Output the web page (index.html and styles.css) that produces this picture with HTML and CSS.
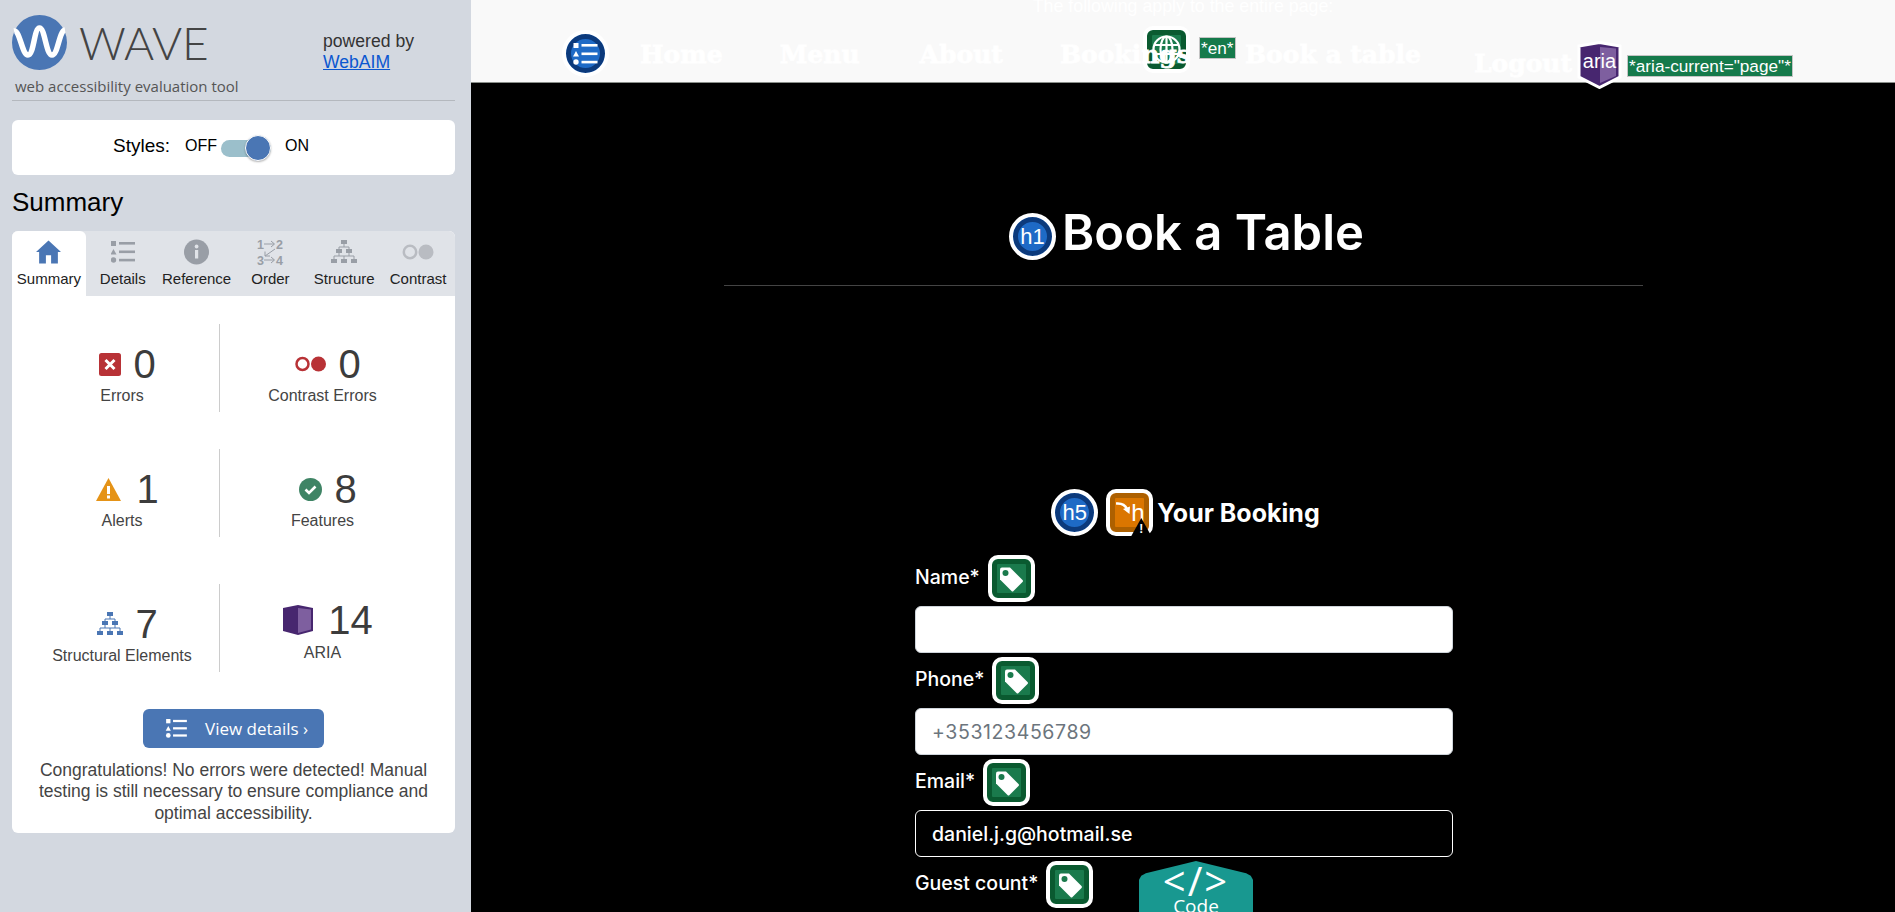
FILE: index.html
```html
<!DOCTYPE html>
<html lang="en">
<head>
    <meta charset="UTF-8">
    <meta name="viewport" content="width=device-width, initial-scale=1.0">
    <title>Book a Table - WAVE</title>
    <link rel="stylesheet" href="styles.css">
</head>
<body>
    <!-- shared icons -->
    <svg class="icon-defs" aria-hidden="true">
        <symbol id="icon-tag" viewBox="0 0 26 26">
            <path d="M2 3.500Q2 1.500 4 1.500H12L24.500 14Q25.500 15 24.500 16L15.500 25Q14.500 26 13.500 25L2 13.500Z" fill="#fff"/>
            <circle cx="7.500" cy="7" r="3" fill="#1a7a4c"/>
        </symbol>
        <symbol id="icon-list" viewBox="0 0 24 22">
            <rect x="0" y="0" width="5" height="5"/>
            <path d="M2.500 8L5.500 13.500H-0.500Z"/>
            <circle cx="2.500" cy="19" r="2.700"/>
            <rect x="8" y="1" width="16" height="2.600"/>
            <rect x="8" y="9.500" width="16" height="2.600"/>
            <rect x="8" y="17.800" width="16" height="2.600"/>
        </symbol>
    </svg>

    <aside class="wave-panel">
        <div class="brand">
            <div class="brand-main">
                <div class="brand-logo">
                    <svg class="logo-mark" viewBox="0 0 55 55">
                        <circle cx="27.500" cy="27.500" r="27.500" fill="#4a76b4"/>
                        <path d="M2 16C8 15 10 40 16 40C22 40 22 13 27.500 13C33 13 34 40 40 40C46 40 47 16 53 15" fill="none" stroke="#fff" stroke-width="5.500"/>
                    </svg>
                    <span class="logo-word">WAVE</span>
                </div>
                <p class="tagline">web accessibility evaluation tool</p>
            </div>
            <p class="powered">powered by<br><a href="#">WebAIM</a></p>
        </div>

        <div class="styles-card">
            <span class="styles-label">Styles:</span>
            <span class="styles-state">OFF</span>
            <span class="toggle"><span class="toggle-knob"></span></span>
            <span class="styles-state">ON</span>
        </div>

        <h2 class="panel-title">Summary</h2>

        <section class="summary-panel">
            <div class="tabs">
                <div class="tab active">
                    <svg class="tab-icon" width="25" height="22" viewBox="0 0 24 22"><path d="M12 0L24 11H21V22H14.500V14H9.500V22H3V11H0Z" fill="#4a76b4"/></svg>
                    <span>Summary</span>
                </div>
                <div class="tab">
                    <svg class="tab-icon grey" width="24" height="22"><use href="#icon-list"/></svg>
                    <span>Details</span>
                </div>
                <div class="tab">
                    <svg class="tab-icon" width="25" height="25" viewBox="0 0 25 25"><circle cx="12.500" cy="12.500" r="12.500" fill="#999ea6"/><rect x="11" y="10.500" width="3.200" height="8.500" fill="#e0e3e8"/><circle cx="12.600" cy="7" r="1.900" fill="#e0e3e8"/></svg>
                    <span>Reference</span>
                </div>
                <div class="tab">
                    <svg class="tab-icon" width="26" height="26" viewBox="0 0 26 26">
                        <text x="0" y="9.500" class="order-num">1</text>
                        <text x="19" y="9.500" class="order-num">2</text>
                        <text x="0" y="25.500" class="order-num">3</text>
                        <text x="19" y="25.500" class="order-num">4</text>
                        <path d="M7 5H17M14 2L17.500 5L14 8M7 21H17M14 18L17.500 21L14 24M18 10L8 17M8 12.500V17H13" fill="none" stroke="#999ea6" stroke-width="1"/>
                    </svg>
                    <span>Order</span>
                </div>
                <div class="tab">
                    <svg class="tab-icon" width="26" height="24" viewBox="0 0 26 24" fill="#999ea6">
                        <rect x="10" y="0" width="6" height="4"/>
                        <rect x="5" y="9" width="6" height="4"/>
                        <rect x="15" y="9" width="6" height="4"/>
                        <rect x="0" y="19" width="6" height="4"/>
                        <rect x="10" y="19" width="6" height="4"/>
                        <rect x="20" y="19" width="6" height="4"/>
                        <path d="M13 4V7M8 9V7H18V9M8 13V16M3 19V16H23V19M13 16V19M18 13V16" fill="none" stroke="#999ea6"/>
                    </svg>
                    <span>Structure</span>
                </div>
                <div class="tab">
                    <svg class="tab-icon" width="32" height="16" viewBox="0 0 32 16"><circle cx="8" cy="8" r="6.200" fill="none" stroke="#b9bcc2" stroke-width="2.500"/><circle cx="24" cy="8" r="7.500" fill="#b9bcc2"/></svg>
                    <span>Contrast</span>
                </div>
            </div>

            <div class="stats">
                <div class="stat">
                    <div class="stat-top">
                        <svg width="22" height="23" viewBox="0 0 22 23"><rect width="22" height="23" rx="2.500" fill="#b83236"/><path d="M6.500 7L15.500 16M15.500 7L6.500 16" stroke="#fff" stroke-width="3"/></svg>
                        <span class="stat-num">0</span>
                    </div>
                    <div class="stat-label">Errors</div>
                </div>
                <div class="stat">
                    <div class="stat-top">
                        <svg width="31" height="16" viewBox="0 0 31 16"><circle cx="7.500" cy="8" r="6" fill="none" stroke="#b83236" stroke-width="2.500"/><circle cx="23.500" cy="8" r="7.500" fill="#b83236"/></svg>
                        <span class="stat-num">0</span>
                    </div>
                    <div class="stat-label">Contrast Errors</div>
                </div>
                <div class="stat">
                    <div class="stat-top">
                        <svg width="25" height="23" viewBox="0 0 25 23"><path d="M12.500 0L25 23H0Z" fill="#e59317"/><rect x="11" y="8" width="3" height="8" fill="#fff"/><rect x="11" y="17.500" width="3" height="3" fill="#fff"/></svg>
                        <span class="stat-num num-gap">1</span>
                    </div>
                    <div class="stat-label">Alerts</div>
                </div>
                <div class="stat">
                    <div class="stat-top">
                        <svg width="23" height="23" viewBox="0 0 23 23"><circle cx="11.500" cy="11.500" r="11.500" fill="#3f8465"/><path d="M6.500 11.500L10 15L16.500 8.500" fill="none" stroke="#fff" stroke-width="2.600"/></svg>
                        <span class="stat-num">8</span>
                    </div>
                    <div class="stat-label">Features</div>
                </div>
                <div class="stat stat-last">
                    <div class="stat-top">
                        <svg width="26" height="24" viewBox="0 0 26 24" fill="#4a76b4">
                            <rect x="10" y="0" width="6" height="4"/>
                            <rect x="5" y="9" width="6" height="4"/>
                            <rect x="15" y="9" width="6" height="4"/>
                            <rect x="0" y="19" width="6" height="4"/>
                            <rect x="10" y="19" width="6" height="4"/>
                            <rect x="20" y="19" width="6" height="4"/>
                            <path d="M13 4V7M8 9V7H18V9M8 13V16M3 19V16H23V19M13 16V19M18 13V16" fill="none" stroke="#4a76b4"/>
                        </svg>
                        <span class="stat-num">7</span>
                    </div>
                    <div class="stat-label">Structural Elements</div>
                </div>
                <div class="stat stat-last stat-aria">
                    <div class="stat-top">
                        <svg width="30" height="30" viewBox="0 0 30 30"><path d="M0 3L15 0L30 3V26L15 30L0 26Z" fill="#47266f"/><path d="M15 3L28 4.500V24.500L15 28Z" fill="#7e5f9f"/></svg>
                        <span class="stat-num num-gap">14</span>
                    </div>
                    <div class="stat-label">ARIA</div>
                </div>
            </div>

            <a class="details-btn" href="#">
                <svg class="details-icon" width="23" height="19"><use href="#icon-list"/></svg>
                View details ›
            </a>
            <p class="congrats">Congratulations! No errors were detected! Manual testing is still necessary to ensure compliance and optimal accessibility.</p>
        </section>
    </aside>

    <main class="page">
        <header class="site-header">
            <p class="page-note">The following apply to the entire page:</p>
            <div class="wave-lang">
                <span class="badge badge-square">
                    <svg width="31" height="31" viewBox="0 0 31 31" fill="none" stroke="#fff" stroke-width="2.200"><circle cx="15.500" cy="15.500" r="13"/><ellipse cx="15.500" cy="15.500" rx="6" ry="13"/><path d="M15.500 2.500V28.500M3 11H28M3 20H28"/></svg>
                </span>
                <span class="attr-tag">*en*</span>
            </div>
            <nav class="site-nav">
                <span class="badge badge-round badge-nav">
                    <svg width="25" height="22"><use href="#icon-list"/></svg>
                </span>
                <a href="#">Home</a>
                <a class="nav-menu" href="#">Menu</a>
                <a href="#">About</a>
                <a class="nav-bookings" href="#">Bookings</a>
                <a href="#">Book a table</a>
                <div class="nav-current">
                    <a href="#">Logout</a>
                    <svg class="aria-badge" width="45" height="48" viewBox="0 0 45 48">
                        <path d="M2 5L22.500 1.500L43 5V36L22.500 46.500L2 36Z" fill="#47266f" stroke="#fff" stroke-width="3"/>
                        <path d="M23 6L39 7.500V35L23 42Z" fill="#7e5f9f"/>
                        <text x="22.500" y="27" class="aria-text">aria</text>
                    </svg>
                    <span class="attr-tag">*aria-current="page"*</span>
                </div>
            </nav>
        </header>

        <div class="title-row">
            <span class="badge badge-round">h1</span>
            <h1>Book a Table</h1>
        </div>

        <form class="booking-form">
            <div class="booking-head">
                <span class="badge badge-round">h5</span>
                <span class="badge badge-square badge-warn">
                    <svg class="warn-arrow" width="15" height="13" viewBox="0 0 15 13"><path d="M0 1.500C5 1 9 2.500 11 7" fill="none" stroke="#fff" stroke-width="2.500"/><path d="M7 7L14 4.500L13.500 12Z" fill="#fff"/></svg>
                    <span class="warn-h">h</span>
                    <span class="warn-flag">!</span>
                </span>
                <h5>Your Booking</h5>
            </div>

            <div class="field">
                <label>Name*
                    <span class="badge badge-square"><svg width="26" height="26"><use href="#icon-tag"/></svg></span>
                </label>
                <input class="input" type="text">
            </div>
            <div class="field">
                <label>Phone*
                    <span class="badge badge-square"><svg width="26" height="26"><use href="#icon-tag"/></svg></span>
                </label>
                <input class="input" type="text" placeholder="+353123456789">
            </div>
            <div class="field">
                <label>Email*
                    <span class="badge badge-square"><svg width="26" height="26"><use href="#icon-tag"/></svg></span>
                </label>
                <input class="input input-dark" type="text" value="daniel.j.g@hotmail.se">
            </div>
            <div class="field">
                <label>Guest count*
                    <span class="badge badge-square"><svg width="26" height="26"><use href="#icon-tag"/></svg></span>
                </label>
            </div>
        </form>

        <div class="code-tab">
            <span class="code-glyph">&lt;/&gt;</span>
            <span class="code-word">Code</span>
        </div>
    </main>
</body>
</html>
```

FILE: styles.css
```css
* {
    box-sizing: border-box;
}

html, body {
    height: 100%;
}

body {
    margin: 0;
    display: flex;
    overflow: hidden;
    background: #000;
    font-family: "Liberation Sans", Arial, sans-serif;
}

.icon-defs {
    position: absolute;
    width: 0;
    height: 0;
}

/* WAVE sidebar */
.wave-panel {
    flex: 0 0 471px;
    height: 100%;
    padding: 0 16px 0 12px;
    background: #d3d8e0;
}

.brand {
    display: flex;
    height: 101px;
    padding-top: 15px;
    border-bottom: 1px solid #b4b8be;
}

.brand-main {
    width: 311px;
}

.brand-logo {
    display: flex;
    align-items: center;
    gap: 12px;
}

.logo-mark {
    width: 55px;
    height: 55px;
}

.logo-word {
    font-family: Lato, sans-serif;
    font-weight: 300;
    font-size: 46px;
    line-height: 55px;
    color: #444;
}

.tagline {
    margin: 6px 0 0 3px;
    font-family: "Open Sans", sans-serif;
    font-size: 15px;
    line-height: 20px;
    color: #555;
}

.powered {
    margin: 16px 0 0;
    font-size: 17.600px;
    line-height: 21px;
    color: #333;
}

.powered a {
    color: #0b57d0;
}

.styles-card {
    display: flex;
    align-items: center;
    height: 55px;
    margin-top: 19px;
    padding-left: 101px;
    background: #fff;
    border-radius: 6px;
    font-size: 19px;
    color: #000;
}

.styles-label {
    margin: -3px 15px 0 0;
}

.styles-state {
    font-size: 16px;
    margin-top: -4px;
}

.toggle {
    position: relative;
    width: 50px;
    height: 17px;
    margin: 1px 14px 0 4px;
    background: #9bbfcb;
    border-radius: 9px;
}

.toggle-knob {
    position: absolute;
    right: 0;
    top: -5px;
    width: 26px;
    height: 26px;
    border-radius: 50%;
    background: #4a76b4;
    border: 1px solid #fff;
    box-shadow: 0 1px 2px rgba(0, 0, 0, 0.3);
}

.panel-title {
    margin: 13px 0 0;
    font-size: 26px;
    font-weight: 400;
    line-height: 28px;
    color: #000;
}

.summary-panel {
    margin-top: 15px;
    padding-bottom: 9px;
    background: #fff;
    border-radius: 6px;
    text-align: center;
}

.tabs {
    display: grid;
    grid-template-columns: repeat(6, 1fr);
    height: 65px;
    background: #e0e3e8;
    border-radius: 6px 6px 0 0;
}

.tab {
    display: flex;
    flex-direction: column;
    align-items: center;
    font-size: 15px;
    color: #222;
}

.tab.active {
    background: #fff;
    border-radius: 6px 6px 0 0;
}

.tab-icon {
    height: 26px;
    margin: 8px 0 5px;
    overflow: visible;
}

.tab-icon.grey {
    fill: #999ea6;
}

.order-num {
    font-size: 12.500px;
    font-weight: 700;
    fill: #999ea6;
}

.stats {
    display: grid;
    grid-template-columns: 195px 205px;
    row-gap: 37px;
    padding: 28px 30px 0 13px;
}

.stat {
    height: 88px;
    padding-top: 20px;
}

.stat:nth-child(odd) {
    border-right: 1px solid #ccc;
}

.stat-last {
    margin-top: 10px;
}

.stat-top {
    display: flex;
    align-items: center;
    justify-content: center;
    gap: 12px;
    height: 40px;
    padding-left: 11px;
}

.stat-aria .stat-top {
    margin-top: -4px;
    margin-bottom: 4px;
}

.stat-num {
    font-size: 40px;
    line-height: 40px;
    color: #3c3c3c;
}

.num-gap {
    margin-left: 3px;
}

.stat-label {
    margin-top: 3px;
    font-size: 16px;
    line-height: 18px;
    color: #444;
}

.details-btn {
    display: flex;
    align-items: center;
    width: 181px;
    height: 39px;
    margin: 37px auto 0;
    padding-left: 22px;
    background: #4a76b4;
    border-radius: 6px;
    font-family: "Open Sans", sans-serif;
    font-size: 17px;
    color: #fff;
    text-decoration: none;
}

.details-icon {
    margin-right: 17px;
    fill: #fff;
}

.congrats {
    margin: 12px 0 0;
    padding: 0 20px;
    font-size: 17.500px;
    line-height: 21.300px;
    color: #444;
}

/* Site under test */
.page {
    position: relative;
    flex: 1;
    height: 100%;
    overflow: hidden;
    color: #fff;
    font-family: Inter, "Liberation Sans", sans-serif;
}

.site-header {
    position: relative;
    height: 83px;
    background: #f9f9f9;
    border-bottom: 1px solid #8a8f8a;
}

.page-note {
    position: absolute;
    top: -4px;
    left: 0;
    right: 0;
    margin: 0;
    text-align: center;
    font-family: "Liberation Sans", sans-serif;
    font-size: 17.800px;
    line-height: 20px;
}

.site-nav {
    position: relative;
    z-index: 2;
    display: flex;
    align-items: flex-start;
    gap: 57px;
    padding: 30px 0 0 91px;
}

.site-nav a {
    margin-top: 11px;
    font-family: "DejaVu Serif", serif;
    font-weight: 700;
    font-size: 25px;
    line-height: 28px;
    color: #fff;
    text-decoration: none;
    -webkit-text-stroke: 0.8px #fff;
}

.badge-nav {
    margin-right: -26px;
}

.site-nav .nav-menu {
    margin-right: 3px;
}

.site-nav .nav-bookings {
    margin-right: -3px;
}

.nav-current {
    display: flex;
    align-items: flex-start;
    margin: 9px 0 0 -4px;
}

.nav-current .aria-badge {
    margin: 2px 0 0 5px;
}

.aria-text {
    font-family: "Liberation Sans", sans-serif;
    font-size: 20px;
    fill: #fff;
    text-anchor: middle;
}

.nav-current .attr-tag {
    margin: 16px 0 0 5px;
}

.attr-tag {
    padding: 0 1px;
    background: #157a4b;
    border: 1px solid #c4c4c4;
    font-family: "Liberation Sans", sans-serif;
    font-size: 17.200px;
    line-height: 20px;
    color: #fff;
    white-space: nowrap;
}

.wave-lang {
    position: absolute;
    top: 26px;
    left: 672px;
    z-index: 1;
    display: flex;
    align-items: flex-start;
    gap: 9px;
}

.wave-lang .attr-tag {
    margin-top: 11px;
}

/* WAVE icons */
.badge {
    position: relative;
    flex: none;
    display: inline-flex;
    align-items: center;
    justify-content: center;
    width: 47px;
    height: 47px;
    background: #1e6ac6;
    border: 4px solid #fff;
    color: #fff;
    font-family: "Liberation Sans", sans-serif;
    font-weight: 400;
    font-size: 22px;
    letter-spacing: 0;
}

.badge-round {
    border-radius: 50%;
    box-shadow: inset 0 0 0 5px #0c3a7c;
    fill: #fff;
}

.badge-square {
    border-radius: 10px;
    background: #1a7a4c;
    box-shadow: inset 0 0 0 5px #0a5a30;
}

.badge-warn {
    background: #db7600;
    box-shadow: inset 0 0 0 5px #ad6000;
}

.warn-arrow {
    position: absolute;
    top: 9px;
    left: 6px;
}

.warn-h {
    position: absolute;
    left: 21px;
    top: 8px;
    font-size: 24px;
    line-height: 24px;
}

.warn-flag {
    position: absolute;
    right: -2px;
    bottom: -4px;
    width: 20px;
    height: 18px;
    background: #000;
    clip-path: polygon(50% 0, 100% 100%, 0 100%);
    text-align: center;
    font-size: 12px;
    font-weight: 700;
    line-height: 22px;
}

/* Page heading */
.title-row {
    display: flex;
    align-items: flex-start;
    justify-content: center;
    gap: 6px;
    width: 919px;
    height: 203px;
    margin: 0 auto;
    padding: 130px 0 0 7px;
    border-bottom: 1px solid #444;
}

.title-row h1 {
    margin: -4px 0 0;
    font-size: 49px;
    font-weight: 600;
    line-height: 47px;
}

/* Booking form */
.booking-form {
    width: 538px;
    margin: 203px 0 0 444px;
}

.booking-head {
    display: flex;
    align-items: center;
    justify-content: center;
    gap: 8px;
    margin-bottom: 15px;
    padding-left: 3px;
}

.booking-head h5 {
    margin: 0 0 0 -4px;
    font-size: 25px;
    font-weight: 700;
    line-height: 30px;
}

.field {
    padding-top: 4px;
}

.field label {
    display: flex;
    align-items: center;
    gap: 8px;
    height: 47px;
    margin-bottom: 4px;
    padding-bottom: 3px;
    font-size: 19.500px;
    font-weight: 500;
}

.field label .badge {
    margin-bottom: -3px;
}

.input {
    display: block;
    width: 100%;
    height: 47px;
    padding: 0 16px;
    background: #fff;
    border: 1px solid #ced4da;
    border-radius: 6px;
    font-family: Inter, sans-serif;
    font-size: 19.500px;
    color: #212529;
}

.input::placeholder {
    color: #6c757d;
    letter-spacing: 0.6px;
}

.input-dark {
    background: #000;
    border-color: #fff;
    color: #fff;
    font-weight: 500;
}

/* Floating code button */
.code-tab {
    position: absolute;
    top: 861px;
    left: 668px;
    display: flex;
    flex-direction: column;
    align-items: center;
    width: 114px;
    height: 51px;
    background: #189890;
    clip-path: polygon(50% 0, 94% 24%, 98% 29%, 100% 37%, 100% 100%, 0 100%, 0 37%, 2% 29%, 6% 24%);
    font-family: "Open Sans", sans-serif;
}

.code-glyph {
    font-size: 40px;
    line-height: 40px;
    letter-spacing: 2px;
}

.code-word {
    margin-top: -6px;
    font-size: 19px;
    line-height: 22px;
}
```
